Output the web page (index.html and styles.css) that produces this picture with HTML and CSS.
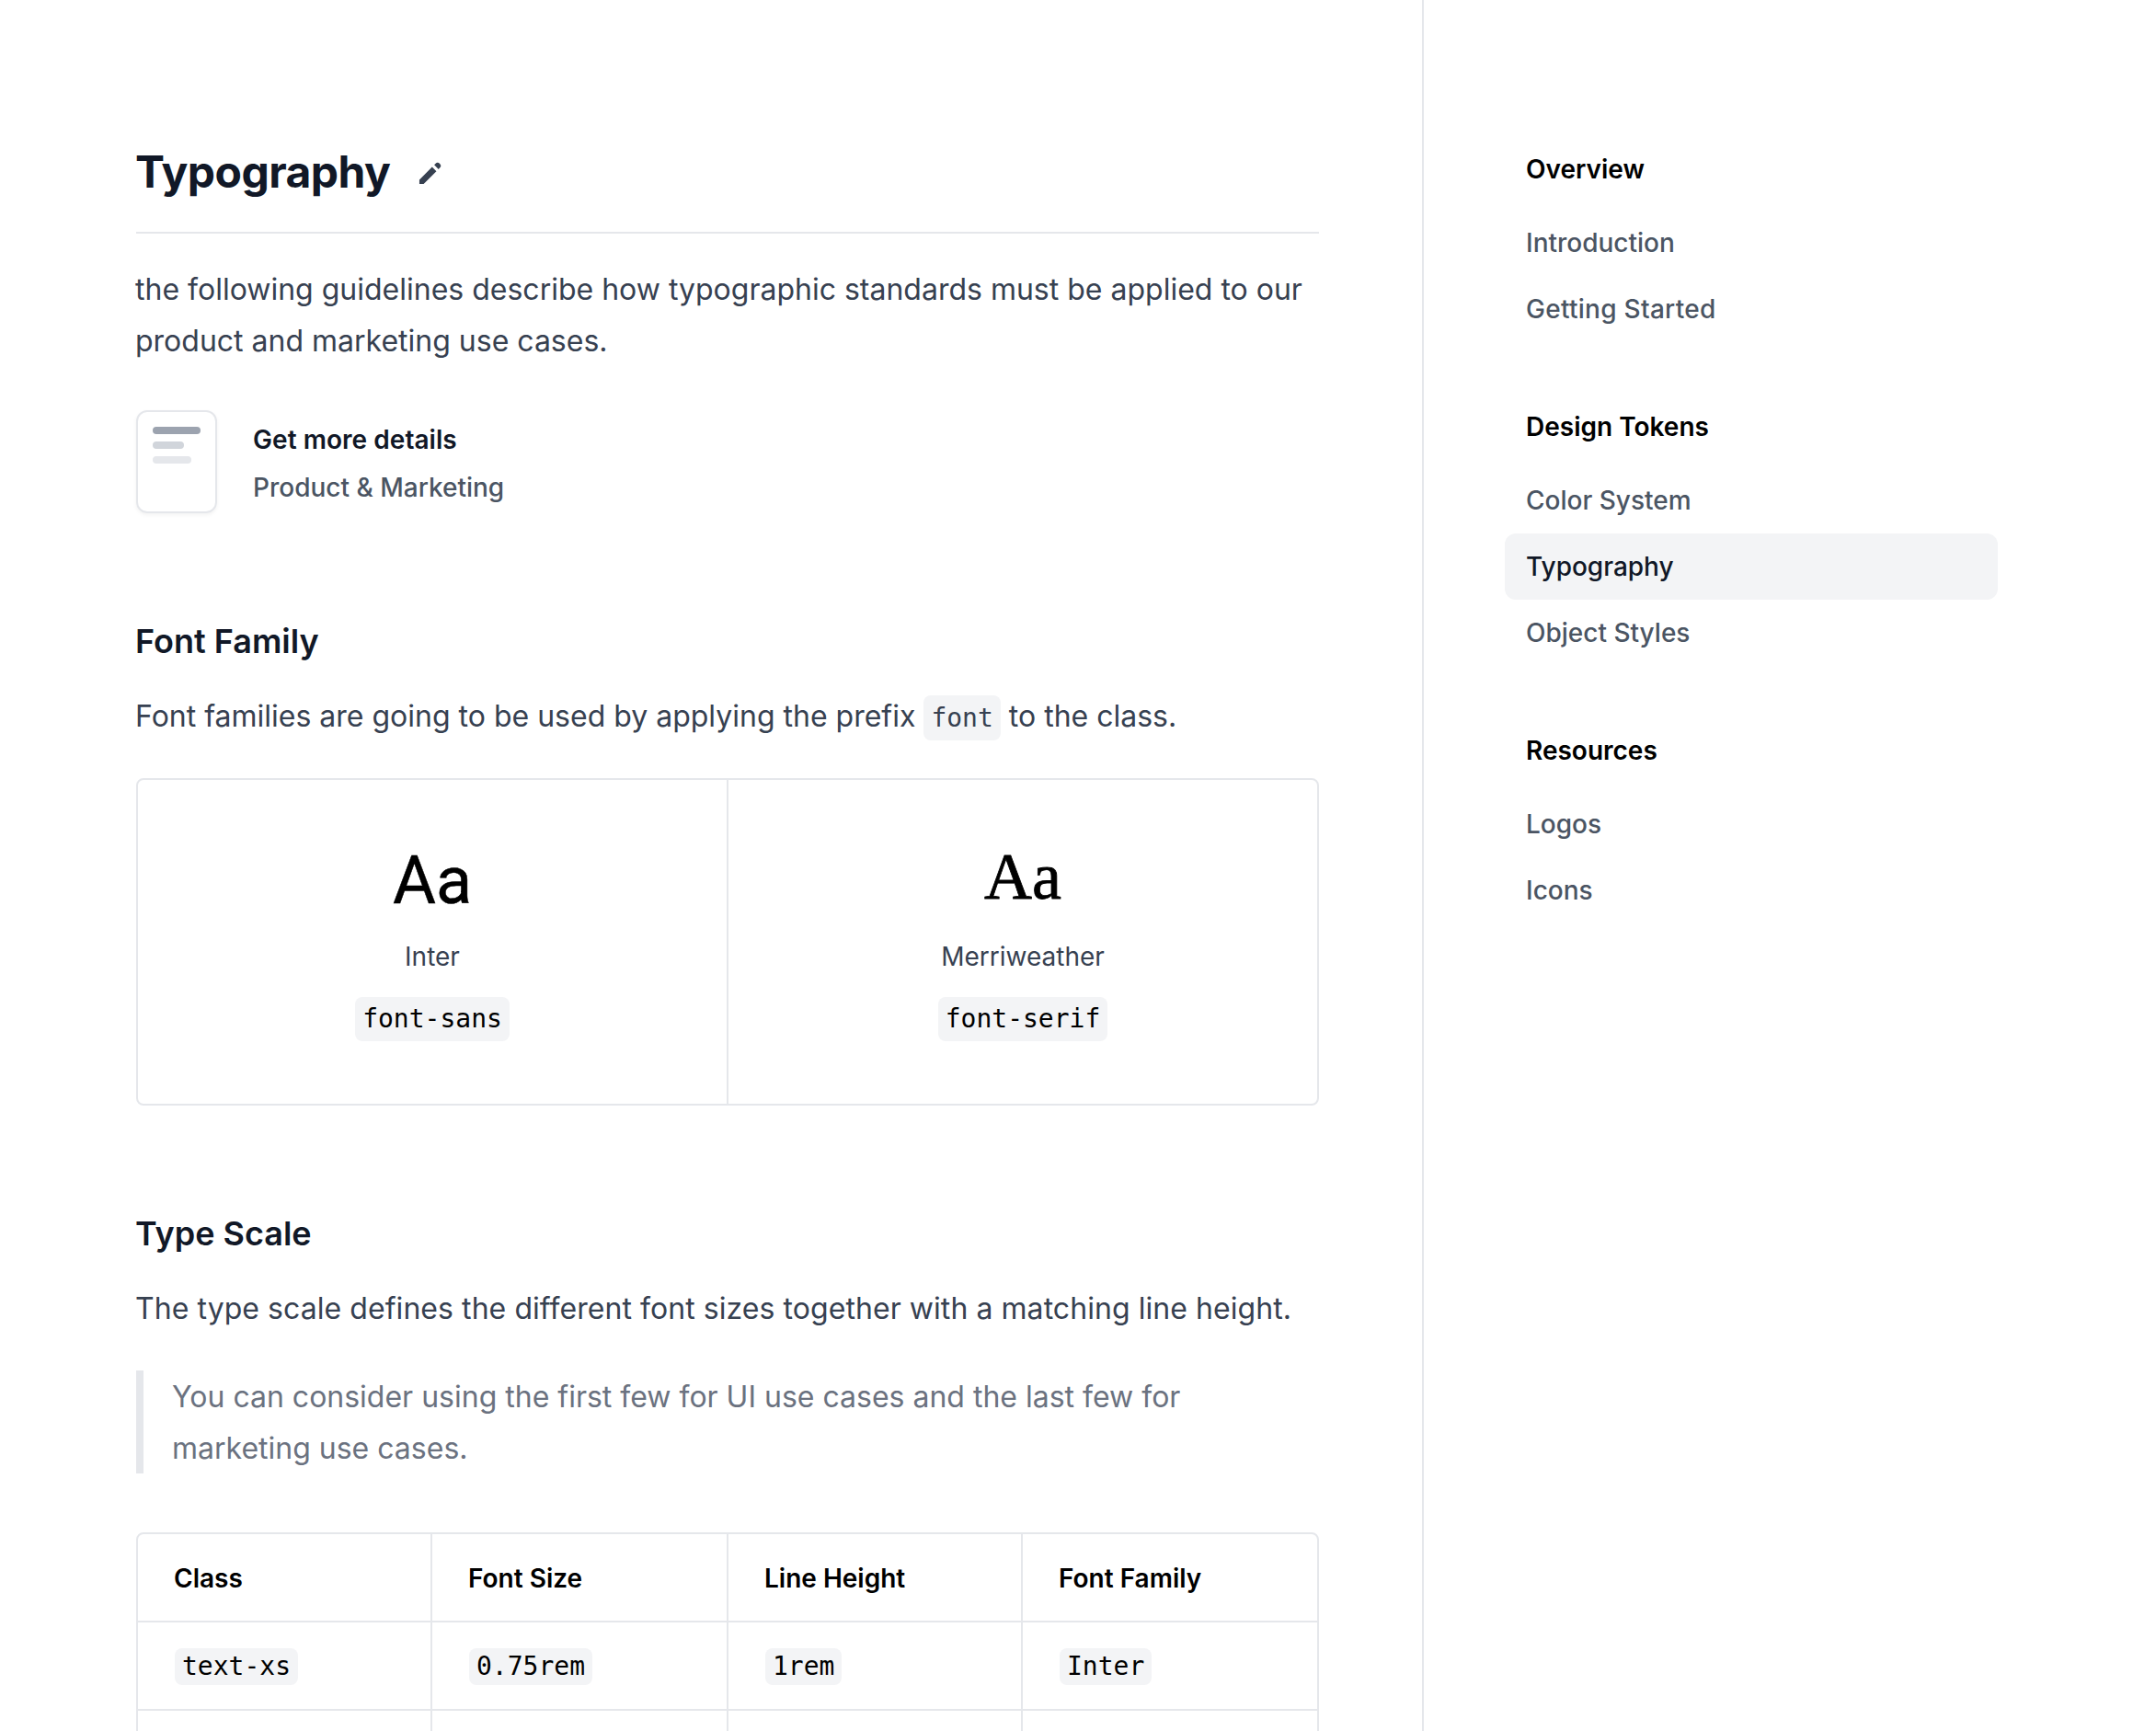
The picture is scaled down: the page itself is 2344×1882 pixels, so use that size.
FILE: index.html
```html
<!DOCTYPE html>
<html lang="en">
<head>
<meta charset="utf-8">
<title>Typography</title>
<link rel="stylesheet" href="styles.css">
</head>
<body>
<div class="page">
  <main class="content">
    <header class="title">
      <h1>Typography</h1>
      <svg class="pencil" viewBox="0 0 20 20" fill="currentColor" aria-hidden="true"><path d="M13.586 3.586a2 2 0 112.828 2.828l-.793.793-2.828-2.828.793-.793zM11.379 5.793L3 14.172V17h2.828l8.38-8.379-2.83-2.828z"/></svg>
    </header>
    <p class="text intro">the following guidelines describe how typographic standards must be applied to our product and marketing use cases.</p>
    <a class="details">
      <span class="doc"><span class="bar bar-dark"></span><span class="bar bar-mid"></span><span class="bar bar-light"></span></span>
      <span class="details-text"><strong>Get more details</strong><span>Product &amp; Marketing</span></span>
    </a>

    <section class="section">
      <h2>Font Family</h2>
      <p class="text">Font families are going to be used by applying the prefix <code class="code">font</code> to the class.</p>
      <div class="families">
        <div class="family">
          <span class="sample">Aa</span>
          <span class="name">Inter</span>
          <code class="code">font-sans</code>
        </div>
        <div class="family">
          <span class="sample serif">Aa</span>
          <span class="name">Merriweather</span>
          <code class="code">font-serif</code>
        </div>
      </div>
    </section>

    <section class="section">
      <h2>Type Scale</h2>
      <p class="text scale-intro">The type scale defines the different font sizes together with a matching line height.</p>
      <blockquote class="text">You can consider using the first few for UI use cases and the last few for marketing use cases.</blockquote>
      <div class="table">
        <div class="row head"><span>Class</span><span>Font Size</span><span>Line Height</span><span>Font Family</span></div>
        <div class="row"><span><code class="code">text-xs</code></span><span><code class="code">0.75rem</code></span><span><code class="code">1rem</code></span><span><code class="code">Inter</code></span></div>
        <div class="row"><span></span><span></span><span></span><span></span></div>
      </div>
    </section>
  </main>

  <nav class="sidebar">
    <div class="group">
      <h3>Overview</h3>
      <a>Introduction</a>
      <a class="spaced">Getting Started</a>
    </div>
    <div class="group">
      <h3>Design Tokens</h3>
      <a>Color System</a>
      <a class="active">Typography</a>
      <a>Object Styles</a>
    </div>
    <div class="group">
      <h3>Resources</h3>
      <a>Logos</a>
      <a>Icons</a>
    </div>
  </nav>
</div>
</body>
</html>
```
FILE: styles.css
```css
* { box-sizing: border-box; margin: 0; padding: 0; }

body {
  font-family: Inter, "Liberation Sans", sans-serif;
  font-size: 28px;
  line-height: 40px;
  color: #000;
  background: #fff;
}

.page {
  display: flex;
  height: 1882px;
  overflow: hidden;
}

.content {
  width: 1546px;
  flex: none;
  padding: 156px 112px 0 148px;
}

.title {
  display: flex;
  align-items: center;
  height: 98px;
  padding-bottom: 34px;
  border-bottom: 2px solid #e5e7eb;
  color: #374151;
}

h1 {
  margin-left: -1px;
  font-size: 48px;
  line-height: 60px;
  font-weight: 700;
  letter-spacing: -0.55px;
  color: #111827;
}

.pencil {
  width: 33px;
  height: 33px;
  margin: 2px 0 0 27px;
}

.text {
  margin-left: -1px;
  font-size: 32px;
  line-height: 56px;
  color: #374151;
}

.intro { margin-top: 33px; }
.scale-intro { letter-spacing: 0.06px; }

.details {
  display: flex;
  margin-top: 47px;
  gap: 39px;
}

.doc {
  display: flex;
  flex-direction: column;
  gap: 8px;
  width: 88px;
  height: 112px;
  padding: 16px;
  border: 2px solid #e5e7eb;
  border-radius: 12px;
  box-shadow: 0 2px 4px rgba(0, 0, 0, 0.05);
}

.bar { height: 8px; border-radius: 4px; }
.bar-dark { width: 52px; background: #9ca3af; }
.bar-mid { width: 34px; background: #d1d5db; }
.bar-light { width: 42px; background: #e5e7eb; }

.details-text {
  display: flex;
  flex-direction: column;
  gap: 12px;
  padding-top: 12px;
  font-weight: 500;
  color: #4b5563;
}

.details-text strong {
  font-weight: 600;
  letter-spacing: 0.05px;
  color: #111827;
}

h2 {
  margin: 0 0 26px -1px;
  font-size: 36px;
  line-height: 56px;
  font-weight: 600;
  color: #111827;
}

.section { margin-top: 111px; }

.code {
  font-family: "DejaVu Sans Mono", "Liberation Mono", monospace;
  font-size: 28px;
  line-height: 32px;
  padding: 8px;
  border-radius: 8px;
  background: #f3f4f6;
}

.families {
  display: grid;
  grid-template-columns: 642px 1fr;
  height: 356px;
  margin-top: 39px;
  border: 2px solid #e5e7eb;
  border-radius: 8px;
}

.family {
  display: flex;
  flex-direction: column;
  align-items: center;
  padding-top: 68px;
}

.family:first-child { border-right: 2px solid #e5e7eb; }
.family .code { height: 48px; }

.sample {
  padding-top: 4px;
  font-family: Roboto, Inter, sans-serif;
  font-size: 72px;
  line-height: 76px;
  -webkit-text-stroke: 0.5px #000;
}

.sample.serif {
  padding: 0 0 5px;
  font-family: "Liberation Serif", serif;
  line-height: 75px;
  -webkit-text-stroke: 0.8px #000;
}

.name { margin: 24px 0; color: #374151; }

blockquote {
  height: 112px;
  margin-top: 39px;
  padding: 1px 0 0 31px;
  border-left: 8px solid #e5e7eb;
}

blockquote.text { margin-left: 0; color: #6b7280; }

.table {
  margin-top: 64px;
  border: 2px solid #e5e7eb;
  border-radius: 8px 8px 0 0;
}

.row {
  display: grid;
  grid-template-columns: 320px 322px 320px 1fr;
  height: 96px;
  border-bottom: 2px solid #e5e7eb;
}

.row > span {
  display: flex;
  align-items: center;
  padding: 2px 0 0 40px;
  border-right: 2px solid #e5e7eb;
}

.row > span:last-child { border-right: 0; }
.row.head > span { padding-left: 39px; }
.head { font-weight: 600; }
.row .code { height: 40px; padding: 4px 8px; }

.sidebar {
  flex: 1;
  padding: 164px 172px 0 88px;
  border-left: 2px solid #e5e7eb;
}

.group { margin-bottom: 72px; }

.group h3 {
  margin-bottom: 24px;
  padding-left: 23px;
  font-size: 28px;
  line-height: 40px;
  font-weight: 600;
}

.group a {
  display: block;
  padding: 16px 23px;
  border-radius: 12px;
  font-weight: 500;
  color: #4b5563;
}

.group .spaced { letter-spacing: 0.28px; }
.group .active { background: #f3f4f6; color: #111827; }
```
